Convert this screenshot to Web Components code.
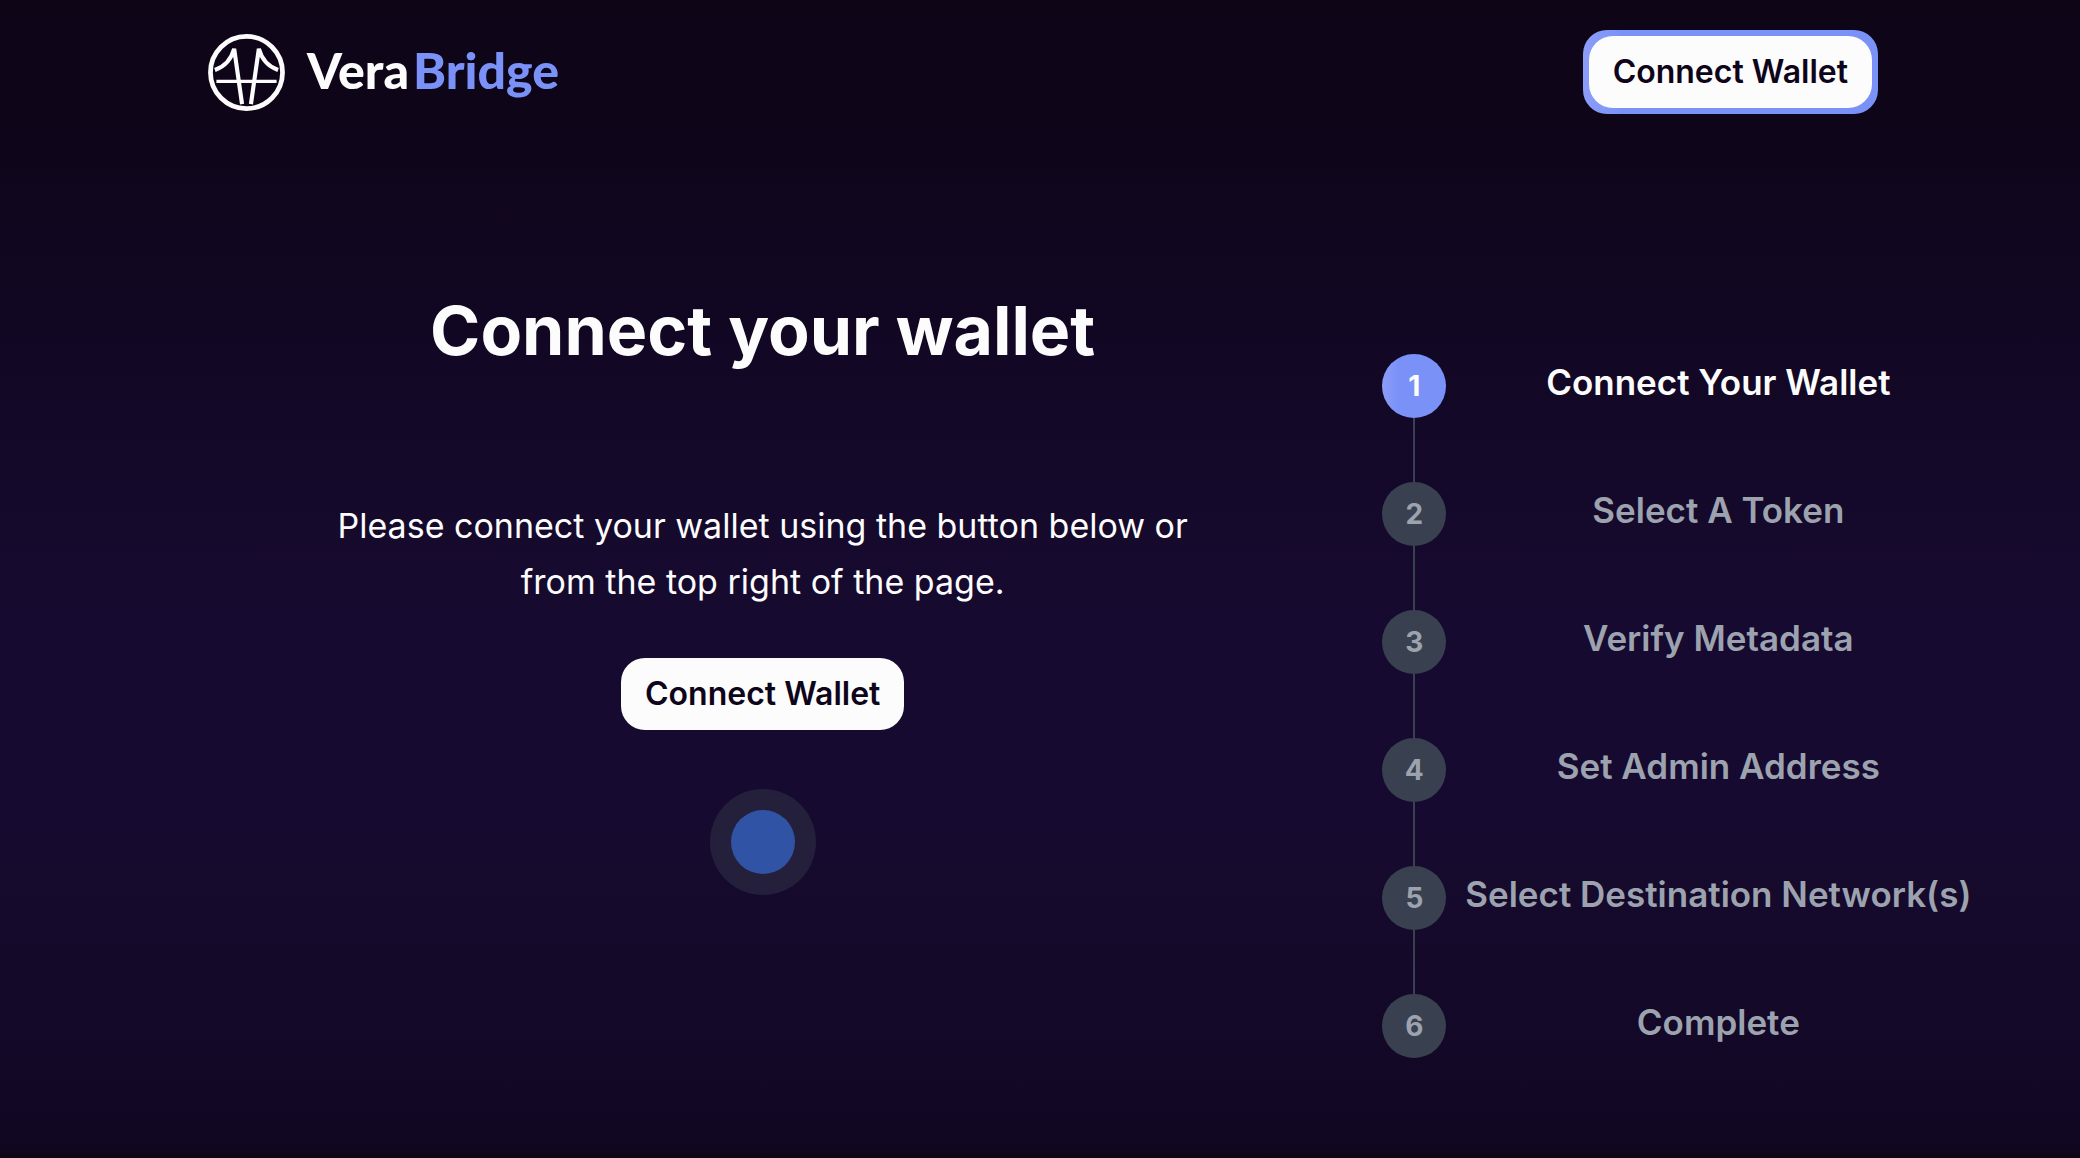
<!DOCTYPE html>
<html lang="en">
<head>
<meta charset="utf-8">
<title>VeraBridge</title>
<style>
  html { min-height: 100%; }
  body {
    margin: 0;
    min-height: 100vh;
    color: #fcfcfc;
    font-family: Inter, "Liberation Sans", sans-serif;
    background: #0e0517 linear-gradient(180deg, #0e0517 0%, #0f0519 10%, #120724 30%, #15092b 43%, #170a30 54%, #170a30 70%, #150a2b 80%, #120724 96%, #110620 99%, #0e0517 100%);
  }
</style>
</head>
<body>
<bridge-app></bridge-app>
<script>
const define = (name, html, setup) => {
  const template = document.createElement('template');
  template.innerHTML = html;
  customElements.define(name, class extends HTMLElement {
    constructor() {
      super();
      this.attachShadow({ mode: 'open' }).append(template.content.cloneNode(true));
    }
    connectedCallback() { if (setup) setup(this, this.shadowRoot); }
  });
};

define('bridge-logo', `
  <style>
    :host { display: block; }
    a { display: flex; align-items: center; gap: 22px; color: inherit; text-decoration: none; }
    svg { width: 77px; height: 77px; display: block; }
    .name { display: flex; gap: 4px; font: 900 50px/72px Lato, sans-serif; padding-bottom: 4px; }
    .accent { color: #7a92f8; }
  </style>
  <a href="#">
    <svg viewBox="0 0 78 78" fill="none" stroke="#fcfcfc" aria-hidden="true">
      <circle cx="39" cy="39" r="36.5" stroke-width="4.8"/>
      <path d="M8.500 48H69.500" stroke-width="3.4"/>
      <path d="M7 36.500C17 33 23.500 26 26.500 15L34.500 71" stroke-width="4.2" stroke-linejoin="bevel"/>
      <path d="M71 36.500C61 33 54.500 26 51.500 15L43.500 71" stroke-width="4.2" stroke-linejoin="bevel"/>
    </svg>
    <span class="name"><span>Vera</span><span class="accent">Bridge</span></span>
  </a>`);

define('wallet-button', `
  <style>
    :host { display: inline-block; }
    button {
      display: block; margin: 0; border: 0; border-radius: 24px; padding: 12px 24px;
      background: #fcfcfc; color: #0f051a; font: 600 32px/48px Inter, "Liberation Sans", sans-serif;
      white-space: nowrap; cursor: pointer;
    }
    :host([ring]) { padding: 6px; margin-right: -6px; border-radius: 24px; background: linear-gradient(90deg, #8c9df8 0, #7a92f8 40px); }
  </style>
  <button type="button"><slot></slot></button>`);

define('pulse-loader', `
  <style>
    :host { display: grid; place-items: center; width: 106px; height: 106px; border-radius: 50%; background: #24203b; }
    i { width: 64px; height: 64px; border-radius: 50%; background: #3153a5; }
  </style>
  <i></i>`);

define('step-item', `
  <style>
    :host { display: grid; grid-template-columns: 64px minmax(512px, max-content); column-gap: 16px; color: #9ca3af; }
    .rail { display: flex; flex-direction: column; align-items: center; }
    .dot {
      width: 64px; height: 64px; border-radius: 50%; display: grid; place-items: center;
      background: #394150; font: 700 28px/40px Inter, "Liberation Sans", sans-serif;
    }
    .line { width: 2px; height: 64px; background: #394150; }
    .label { text-align: center; font-size: 35px; font-weight: 600; line-height: 56px; white-space: nowrap; }
    :host([active]) { color: #fcfcfc; }
    :host([active]) .dot { background: linear-gradient(90deg, #8c9df8 0, #7a92f8 16px); }
    :host([last]) .line { display: none; }
  </style>
  <div class="rail"><span class="dot"></span><span class="line"></span></div>
  <div class="label"><slot></slot></div>`,
  (el, root) => { root.querySelector('.dot').textContent = el.getAttribute('number'); });

define('step-list', `
  <style>:host { display: flex; flex-direction: column; }</style>
  <slot></slot>`, el => el.setAttribute('role', 'list'));

define('connect-panel', `
  <style>
    :host { display: flex; flex-direction: column; align-items: center; text-align: center; }
    h1 { margin: 0 0 132px; font-size: 68px; font-weight: 700; line-height: 72px; }
    p { margin: 0 0 48px; max-width: 880px; font-size: 34px; line-height: 56px; }
    pulse-loader { margin-top: 59px; }
  </style>
  <h1>Connect your wallet</h1>
  <p>Please connect your wallet using the button below or from the top right of the page.</p>
  <wallet-button>Connect Wallet</wallet-button>
  <pulse-loader></pulse-loader>`);

define('bridge-app', `
  <style>
    :host { display: block; overflow-x: clip; }
    header, main { width: 80%; margin: 0 auto; }
    header { display: flex; justify-content: space-between; align-items: center; height: 144px; }
    main { display: grid; grid-template-columns: 2fr minmax(0, 1fr); padding-top: 150px; }
    step-list { padding: 60px 0 0 65px; }
  </style>
  <header>
    <bridge-logo></bridge-logo>
    <wallet-button ring>Connect Wallet</wallet-button>
  </header>
  <main>
    <connect-panel></connect-panel>
    <step-list>
      <step-item role="listitem" number="1" active>Connect Your Wallet</step-item>
      <step-item role="listitem" number="2">Select A Token</step-item>
      <step-item role="listitem" number="3">Verify Metadata</step-item>
      <step-item role="listitem" number="4">Set Admin Address</step-item>
      <step-item role="listitem" number="5">Select Destination Network(s)</step-item>
      <step-item role="listitem" number="6" last>Complete</step-item>
    </step-list>
  </main>`);
</script>
</body>
</html>
